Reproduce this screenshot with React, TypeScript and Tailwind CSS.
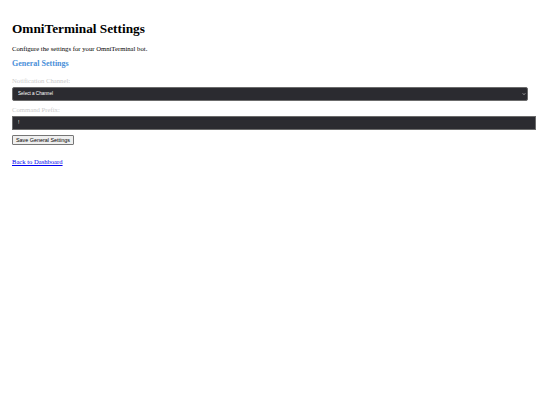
export default function App() {
  return (
    <div className="min-h-[405px] bg-white px-3 pt-[20px] font-['Liberation_Serif',serif] text-black">
      <h1 className="text-[13.3px] font-bold leading-[18px]">OmniTerminal Settings</h1>
      <p className="mt-[6px] text-[6.7px] leading-[9px]">Configure the settings for your OmniTerminal bot.</p>
      <h2 className="mt-[5px] text-[8px] font-bold leading-[11px] text-[#4a90d9]">General Settings</h2>

      <form className="flex flex-col">
        <label className="mt-[7px] text-[6.7px] leading-[9px] text-[#cccccc]">Notification Channel:</label>
        <div className="relative mt-[2px] h-[14px]">
          <select className="block h-full w-full appearance-none rounded-[2px] border border-[#6b6b6b] bg-[#2b2b30] pl-[5px] font-['Liberation_Sans',sans-serif] text-[4.6px] text-white outline-none">
            <option>Select a Channel</option>
          </select>
          <svg
            className="pointer-events-none absolute right-[2px] top-[5px] h-[4px] w-[4px] text-[#d0d0d0]"
            viewBox="0 0 10 10"
            fill="none"
            stroke="currentColor"
            strokeWidth="2"
          >
            <path d="M2 3.5 5 6.5 8 3.5" />
          </svg>
        </div>

        <label className="mt-[3.5px] text-[6.7px] leading-[9px] text-[#cccccc]">Command Prefix:</label>
        <input
          className="mt-[2px] block h-[14px] w-[524px] border border-[#6b6b6b] bg-[#2b2b30] px-[5px] font-['Liberation_Sans',sans-serif] text-[4.6px] text-white outline-none"
          defaultValue="!"
        />

        <div className="mt-[5px] flex">
          <button
            type="button"
            className="h-[10px] rounded-[1px] border border-[#767676] bg-[#efefef] px-[3px] font-['Liberation_Sans',sans-serif] text-[5.4px] leading-[8px] text-black"
          >
            Save General Settings
          </button>
        </div>
      </form>

      <a href="#" className="mt-[12px] block w-fit text-[6.6px] leading-[9px] text-[#0000ee] underline">
        Back to Dashboard
      </a>
    </div>
  )
}
